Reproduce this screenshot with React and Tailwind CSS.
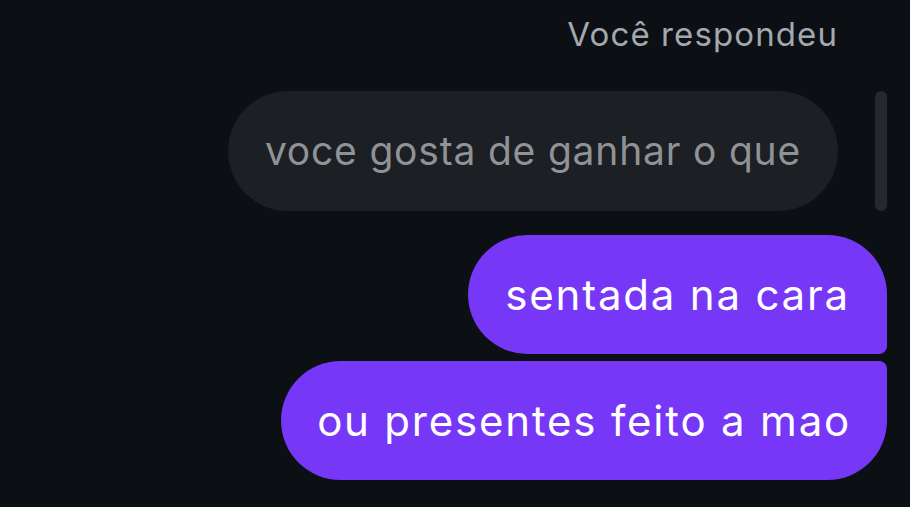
export default function App() {
    return (
        <div
            className="w-[910px] h-[507px] overflow-hidden bg-[#0c1014] flex flex-col items-end pr-[23px]"
            style={{ fontFamily: "Inter, 'Noto Sans', sans-serif" }}
        >
            <div className="mt-[10px] mr-[49px] text-[33px] leading-[48px] text-[#a3a8b0] tracking-[1.1px]">
                Você respondeu
            </div>

            <div className="mt-[33px] flex items-stretch gap-[37px]">
                <div className="h-[120px] px-[37px] rounded-full bg-[#1c1f23] flex items-center text-[39px] tracking-[0.8px] text-[#8f9296]">
                    voce gosta de ganhar o que
                </div>
                <div className="w-[12px] rounded-full bg-[#25282c]" />
            </div>

            <div className="mt-[24px] flex flex-col items-end gap-[7px]">
                <div className="h-[119px] px-[37px] bg-[#7637f6] text-white text-[42px] tracking-[1.8px] flex items-center rounded-l-[60px] rounded-tr-[60px] rounded-br-[8px]">
                    sentada na cara
                </div>
                <div className="h-[119px] px-[36px] bg-[#7637f6] text-white text-[42px] tracking-[1.8px] flex items-center rounded-l-[60px] rounded-tr-[8px] rounded-br-[60px]">
                    ou presentes feito a mao
                </div>
            </div>
        </div>
    );
}
